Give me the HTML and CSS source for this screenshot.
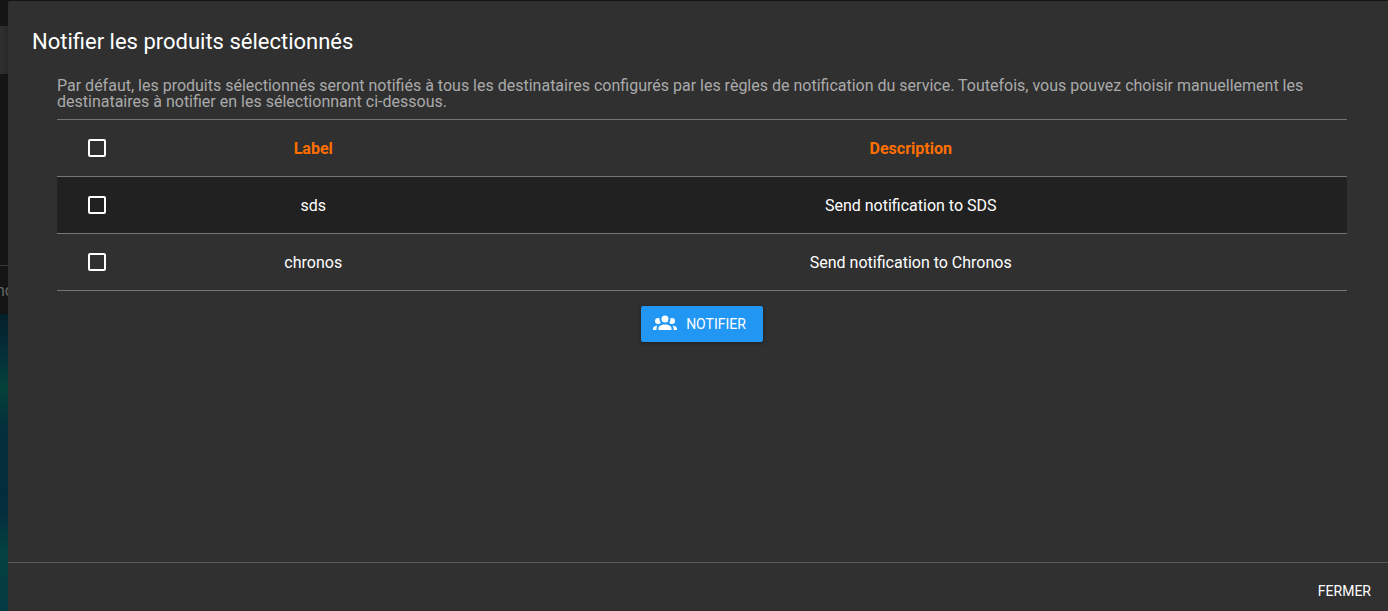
FILE: index.html
```html
<!DOCTYPE html>
<html lang="fr">
<head>
<meta charset="utf-8">
<meta name="viewport" content="width=device-width, initial-scale=1">
<title>Notifier les produits sélectionnés</title>
<link rel="stylesheet" href="styles.css">
</head>
<body>
<div class="backdrop" aria-hidden="true">
  <div class="backdrop-bar"></div>
  <div class="backdrop-panel"></div>
  <div class="backdrop-row"><span>no</span></div>
  <div class="backdrop-sky"></div>
</div>
<main class="dialog" role="dialog" aria-labelledby="dialog-title">
  <h1 class="dialog-title" id="dialog-title">Notifier les produits sélectionnés</h1>
  <div class="dialog-content">
    <p class="intro">Par défaut, les produits sélectionnés seront notifiés à tous les destinataires configurés par les règles de notification du service. Toutefois, vous pouvez choisir manuellement les destinataires à notifier en les sélectionnant ci-dessous.</p>
    <table class="recipients">
      <colgroup><col class="col-check"><col class="col-label"><col></colgroup>
      <thead>
        <tr>
          <td class="check-cell"><input class="check" type="checkbox" aria-label="Tout sélectionner"></td>
          <th scope="col">Label</th>
          <th scope="col">Description</th>
        </tr>
      </thead>
      <tbody>
        <tr>
          <td class="check-cell"><input class="check" type="checkbox" aria-labelledby="r-sds"></td>
          <td id="r-sds">sds</td>
          <td>Send notification to SDS</td>
        </tr>
        <tr>
          <td class="check-cell"><input class="check" type="checkbox" aria-labelledby="r-chronos"></td>
          <td id="r-chronos">chronos</td>
          <td>Send notification to Chronos</td>
        </tr>
      </tbody>
    </table>
    <button class="notify" type="button">
      <svg class="notify-icon" viewBox="0 0 24 24" aria-hidden="true"><path d="M12 5.500A3.500 3.500 0 0 1 15.500 9 3.500 3.500 0 0 1 12 12.500 3.500 3.500 0 0 1 8.500 9 3.500 3.500 0 0 1 12 5.500M5 8c.56 0 1.080.150 1.530.420-.150 1.430.270 2.850 1.130 3.960C7.160 13.340 6.160 14 5 14a3 3 0 0 1-3-3 3 3 0 0 1 3-3m14 0a3 3 0 0 1 3 3 3 3 0 0 1-3 3c-1.160 0-2.160-.660-2.660-1.620a5.540 5.540 0 0 0 1.130-3.960c.450-.270.970-.420 1.530-.420M5.500 18.250c0-2.070 2.910-3.750 6.500-3.750s6.500 1.680 6.500 3.750V20h-13v-1.750M0 20v-1.500c0-1.390 1.890-2.560 4.450-2.900-.590.680-.950 1.620-.950 2.650V20H0m24 0h-3.500v-1.750c0-1.030-.360-1.970-.950-2.650 2.560.340 4.450 1.510 4.450 2.900V20z"/></svg>
      <span>NOTIFIER</span>
    </button>
  </div>
  <footer class="dialog-actions">
    <button class="close" type="button">FERMER</button>
  </footer>
</main>
</body>
</html>
```
FILE: styles.css
```css
* { box-sizing: border-box; }

body {
  display: flex;
  height: 100vh;
  margin: 0;
  overflow: hidden;
  background: #151515;
  color: #fff;
  font: 16px/16px Roboto, sans-serif;
}

.backdrop {
  display: flex;
  flex: 0 0 8px;
  flex-direction: column;
  overflow: hidden;
}

.backdrop-bar { height: 26px; }
.backdrop-panel { height: 48px; background: linear-gradient(to right, #303030, #282828); }

.backdrop-row {
  height: 49px;
  margin-top: 191px;
  border-top: 1px solid #383838;
  color: #666;
  line-height: 50px;
}

.backdrop-row span { margin-left: -4px; }

.backdrop-sky {
  flex: 1;
  background: linear-gradient(to bottom, #03202a 0%, #04303a 14%, #054238 25%, #032f3a 38%, #032c3c 66%, #04413f 80%, #053a43 100%);
}

.dialog {
  display: flex;
  flex: 1;
  flex-direction: column;
  min-width: 0;
  margin-top: 1px;
  border-top-left-radius: 2px;
  background: #303030;
}

.dialog-title {
  margin: 0;
  padding: 25px 24px 20px;
  font-size: 22px;
  font-weight: 400;
  line-height: 32px;
}

.dialog-content {
  display: flex;
  flex: 1;
  flex-direction: column;
  align-items: center;
  padding: 0 41px 0 49px;
}

.intro { width: 100%; margin: 0 0 9px; color: #aaa; }

.recipients {
  width: 100%;
  border-collapse: separate;
  border-spacing: 0;
  border-top: 1px solid #757575;
  table-layout: fixed;
  text-align: center;
}

.col-check { width: 95px; }
.col-label { width: 25%; }

.recipients td,
.recipients th {
  height: 57px;
  padding: 2px 0 0;
  border-bottom: 1px solid #757575;
}

.recipients th { color: #ff6f00; font-weight: 700; }
.recipients .check-cell { padding: 0 0 0 31px; text-align: left; }
.recipients tbody tr:nth-child(odd) { background: #212121; }

.check {
  display: block;
  width: 18px;
  height: 18px;
  margin: 0;
  appearance: none;
  border: 2px solid #fff;
  border-radius: 2px;
}

.check:checked { background: #2196f3; }

.notify {
  display: flex;
  align-items: center;
  gap: 9px;
  height: 36px;
  margin-top: 15px;
  padding: 0 17px 0 12px;
  border: 0;
  border-radius: 2px;
  background: #2196f3;
  box-shadow: 0 1px 4px rgba(0, 0, 0, 0.4);
  color: #fff;
  font: 14px/38px Roboto, sans-serif;
}

.notify-icon { width: 24px; height: 24px; margin-bottom: 4px; fill: currentColor; }

.dialog-actions {
  display: flex;
  justify-content: flex-end;
  padding: 10px 9px 2px;
  border-top: 1px solid #5a5a5a;
}

.close {
  height: 36px;
  padding: 0 8px;
  border: 0;
  background: none;
  color: #fff;
  font: 14px/36px Roboto, sans-serif;
}
```
